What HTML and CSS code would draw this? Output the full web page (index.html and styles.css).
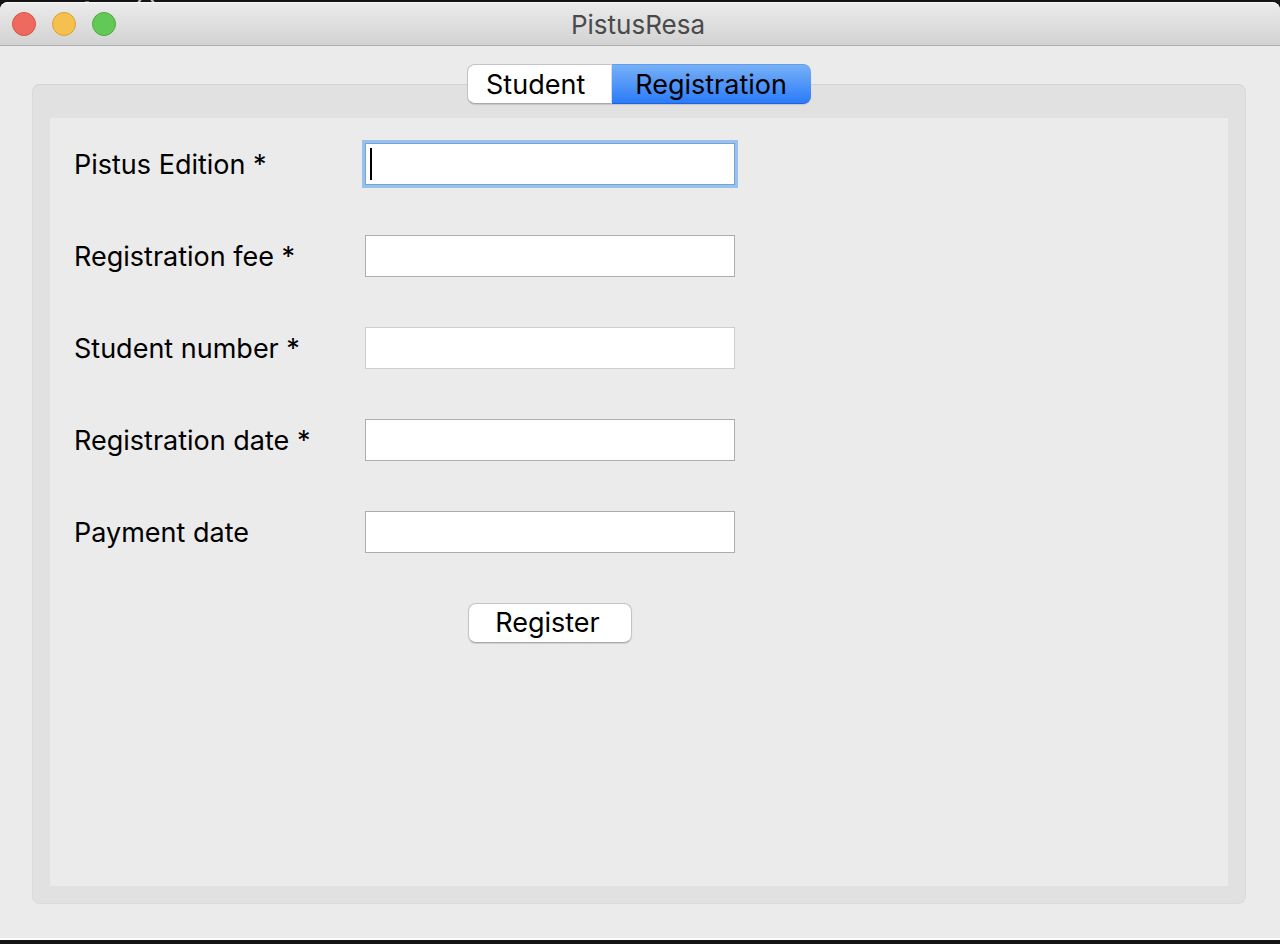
FILE: index.html
```html
<!DOCTYPE html>
<html lang="en">
<head>
<meta charset="utf-8">
<meta name="viewport" content="width=device-width, initial-scale=1">
<title>PistusResa</title>
<link rel="stylesheet" href="styles.css">
</head>
<body class="desktop">
<svg class="desktop-marks" width="160" height="2" viewBox="0 0 160 2" aria-hidden="true">
  <path d="M85 1.5h4" stroke="#77734f"/>
  <path d="M138 2l3-2M154 2l-3-2" stroke="#b5bfc4" stroke-width="2"/>
</svg>
<div class="window">
  <header class="titlebar">
    <div class="lights">
      <button type="button" class="light light-close" aria-label="Close"></button>
      <button type="button" class="light light-minimize" aria-label="Minimize"></button>
      <button type="button" class="light light-zoom" aria-label="Zoom"></button>
    </div>
    <h1 class="title">PistusResa</h1>
  </header>
  <main class="content">
    <div class="tabs" role="tablist">
      <button type="button" class="tab" role="tab" aria-selected="false">Student</button>
      <button type="button" class="tab tab-active" role="tab" aria-selected="true">Registration</button>
    </div>
    <section class="frame">
      <form class="form">
        <label class="label" for="edition">Pistus Edition *</label>
        <input class="field field-focused" id="edition" type="text">
        <label class="label" for="fee">Registration fee *</label>
        <input class="field" id="fee" type="text">
        <label class="label" for="student">Student number *</label>
        <input class="field" id="student" type="text" disabled>
        <label class="label" for="regdate">Registration date *</label>
        <input class="field" id="regdate" type="text">
        <label class="label" for="paydate">Payment date</label>
        <input class="field" id="paydate" type="text">
        <button type="button" class="submit">Register</button>
      </form>
    </section>
  </main>
</div>
</body>
</html>
```

FILE: styles.css
```css
* { box-sizing: border-box; }

.desktop {
  margin: 0;
  min-height: 100vh;
  padding: 2px 0 4px;
  display: flex;
  flex-direction: column;
  background: #141414;
  color: #000;
  font: 27px/32px Inter, "Liberation Sans", sans-serif;
}

.desktop-marks {
  position: absolute;
  top: 0;
  left: 0;
}

.window {
  flex: 1;
  display: flex;
  flex-direction: column;
  border-bottom: 2px solid #fff;
  border-radius: 8px 8px 0 0;
  background: #ebebeb;
}

.titlebar {
  display: grid;
  grid-template-columns: 1fr auto 1fr;
  align-items: center;
  height: 44px;
  padding: 0 16px 0 12px;
  border-top: 1px solid #f7f7f7;
  border-bottom: 1px solid #b0b0b0;
  border-radius: 8px 8px 0 0;
  background: linear-gradient(#ebebeb, #d2d2d2);
}

.lights {
  display: flex;
  gap: 16px;
}

.light {
  width: 24px;
  height: 24px;
  padding: 0;
  border: 1px solid;
  border-radius: 50%;
}

.light-close { background: #ee6a5f; border-color: #d5544a; }
.light-minimize { background: #f6c04f; border-color: #d9a03c; }
.light-zoom { background: #62c956; border-color: #4bab40; }

.title {
  margin: 0;
  padding-top: 2px;
  color: #4a4a4a;
  font-size: 26px;
  font-weight: 400;
}

.content {
  flex: 1;
  display: flex;
  flex-direction: column;
  padding: 18px 34px 34px 32px;
}

.tabs {
  position: relative;
  z-index: 1;
  align-self: center;
  display: flex;
  margin-bottom: -20px;
}

.tab {
  height: 40px;
  padding: 2px 26px 0 18px;
  border: 1px solid #c4c4c4;
  border-bottom-color: #a9a9a9;
  border-right-color: #dedede;
  border-radius: 8px 0 0 8px;
  background: #fff;
  color: #000;
  font: inherit;
  box-shadow: 0 1px 1px #00000020;
}

.tab-active {
  padding: 2px 24px 0 23px;
  border: 0;
  border-top: 1px solid #5f9eea;
  border-bottom: 1px solid #1b62ea;
  border-radius: 0 8px 8px 0;
  background: linear-gradient(#77b0f6, #2b7bf9);
}

.frame {
  flex: 1;
  display: flex;
  padding: 33px 17px 17px;
  border: 1px solid #dadada;
  border-top-color: #d2d2d2;
  border-radius: 8px;
  background: #e1e1e1;
}

.form {
  flex: 1;
  display: grid;
  grid-template-columns: 291px minmax(200px, 370px);
  gap: 50px 0;
  align-content: start;
  align-items: center;
  padding: 25px 24px;
  background: #ebebeb;
}

.label { padding-top: 2px; }

.field {
  width: 100%;
  height: 42px;
  padding: 4px;
  border: 1px solid #adadad;
  border-radius: 0;
  background: #fff;
  font: inherit;
}

.field:focus { outline: 3px solid #99c1ee; }
.field:disabled { border-color: #cdcdcd; }

.field-focused {
  border-color: #78a3d6;
  outline: 3px solid #99c1ee;
  background: linear-gradient(#000, #000) 4px 4px / 2px 32px no-repeat #fff;
}

.submit {
  grid-column: 2;
  justify-self: center;
  height: 40px;
  padding: 0 31px 0 26px;
  border: 1px solid #c4c4c4;
  border-bottom-color: #a9a9a9;
  border-radius: 8px;
  background: #fff;
  color: #000;
  font: inherit;
  box-shadow: 0 1px 1px #00000020;
}
```
